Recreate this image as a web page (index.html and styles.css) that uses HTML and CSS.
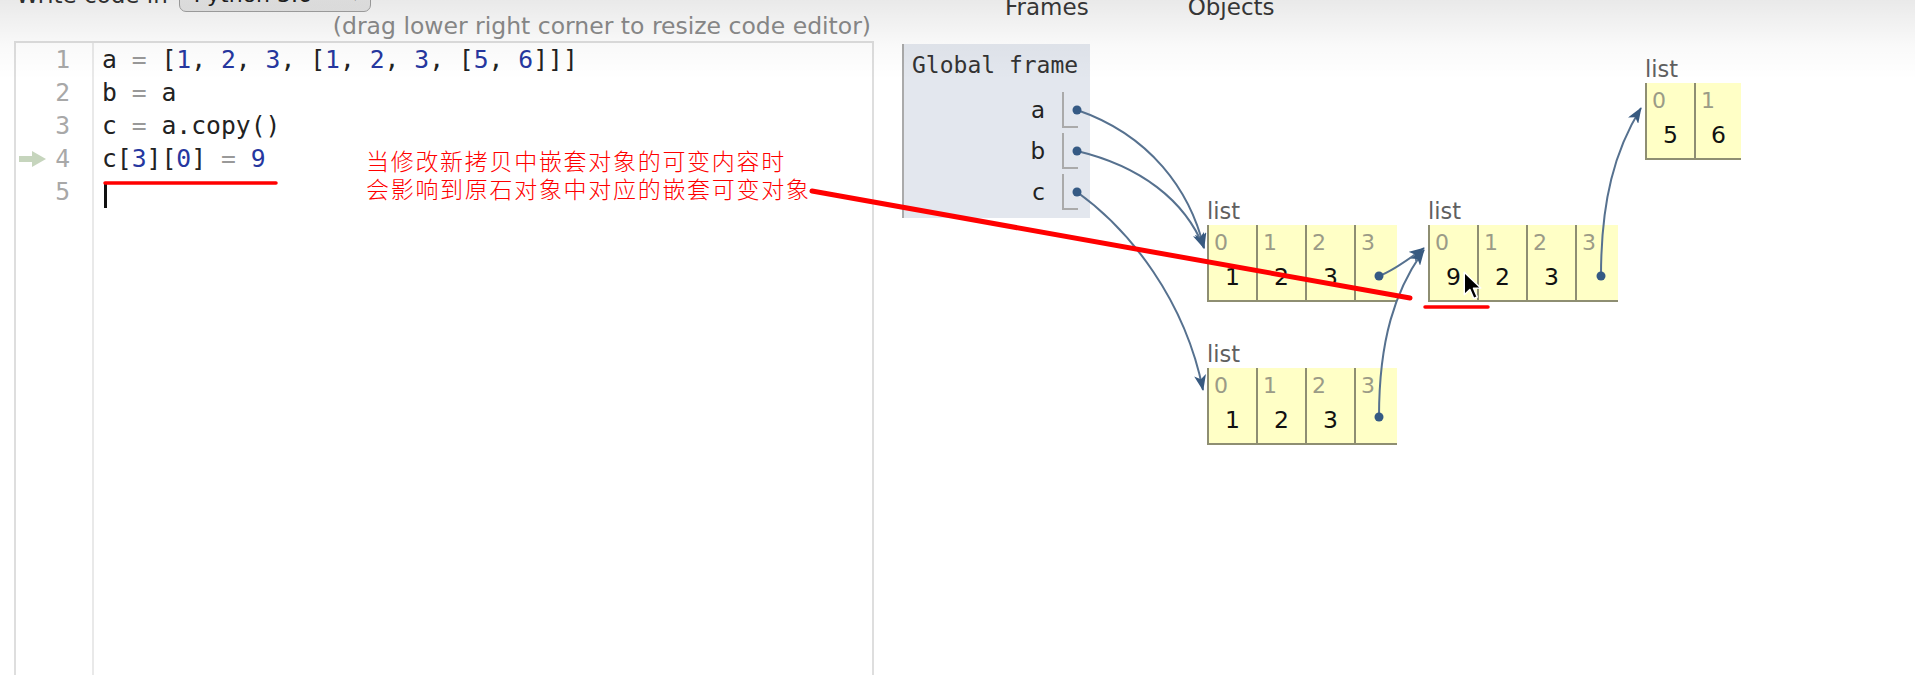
FILE: index.html
```html
<!DOCTYPE html>
<html lang="zh">
<head>
<meta charset="utf-8">
<title>Python Tutor</title>
<link rel="stylesheet" href="styles.css">
</head>
<body>
<div class="page">
  <section class="left">
    <div class="lang-row">
      <span class="lang-label">Write code in</span>
      <div class="lang-select"><span>Python 3.6</span><span class="caret">▾</span></div>
    </div>
    <div class="hint">(drag lower right corner to resize code editor)</div>
    <div class="editor">
      <div class="gutter">
        <div class="gl">1</div>
        <div class="gl">2</div>
        <div class="gl">3</div>
        <div class="gl"><svg class="pc-arrow" viewBox="0 0 27 16"><rect x="0" y="5" width="15" height="6" fill="#c6d5bd"/><polygon points="13,0 27,8 13,16" fill="#c6d5bd"/></svg><span>4</span></div>
        <div class="gl">5</div>
      </div>
      <div class="code">
        <div class="cl">a <span class="op">=</span> [<span class="n">1</span>, <span class="n">2</span>, <span class="n">3</span>, [<span class="n">1</span>, <span class="n">2</span>, <span class="n">3</span>, [<span class="n">5</span>, <span class="n">6</span>]]]</div>
        <div class="cl">b <span class="op">=</span> a</div>
        <div class="cl">c <span class="op">=</span> a.copy()</div>
        <div class="cl">c[<span class="n">3</span>][<span class="n">0</span>] <span class="op">=</span> <span class="n">9</span></div>
        <div class="cl"><span class="text-cursor"></span></div>
      </div>
    </div>
  </section>
  <section class="right">
    <div class="viz-head"><span>Frames</span><span>Objects</span></div>
    <div class="viz">
      <div class="frame">
        <div class="frame-title">Global frame</div>
        <div class="vars">
          <div class="var"><span class="var-name">a</span><span class="ptr"></span></div>
          <div class="var"><span class="var-name">b</span><span class="ptr"></span></div>
          <div class="var"><span class="var-name">c</span><span class="ptr"></span></div>
        </div>
      </div>
      <div class="heap">
        <div class="hobj obj-a">
          <div class="hobj-label">list</div>
          <div class="hlist">
            <div class="cell"><div class="idx">0</div><div class="val">1</div></div>
            <div class="cell"><div class="idx">1</div><div class="val">2</div></div>
            <div class="cell"><div class="idx">2</div><div class="val">3</div></div>
            <div class="cell narrow"><div class="idx">3</div><div class="val">&nbsp;</div></div>
          </div>
        </div>
        <div class="hobj obj-b">
          <div class="hobj-label">list</div>
          <div class="hlist">
            <div class="cell"><div class="idx">0</div><div class="val">9</div></div>
            <div class="cell"><div class="idx">1</div><div class="val">2</div></div>
            <div class="cell"><div class="idx">2</div><div class="val">3</div></div>
            <div class="cell narrow"><div class="idx">3</div><div class="val">&nbsp;</div></div>
          </div>
        </div>
        <div class="hobj obj-c">
          <div class="hobj-label">list</div>
          <div class="hlist">
            <div class="cell"><div class="idx">0</div><div class="val">5</div></div>
            <div class="cell short"><div class="idx">1</div><div class="val">6</div></div>
          </div>
        </div>
        <div class="hobj obj-d">
          <div class="hobj-label">list</div>
          <div class="hlist">
            <div class="cell"><div class="idx">0</div><div class="val">1</div></div>
            <div class="cell"><div class="idx">1</div><div class="val">2</div></div>
            <div class="cell"><div class="idx">2</div><div class="val">3</div></div>
            <div class="cell narrow"><div class="idx">3</div><div class="val">&nbsp;</div></div>
          </div>
        </div>
      </div>
    </div>
  </section>
</div>

<svg class="links" viewBox="0 0 1915 675">
  <defs>
    <marker id="ah" viewBox="0 0 16 12" refX="15" refY="6" markerWidth="16" markerHeight="12" markerUnits="userSpaceOnUse" orient="auto">
      <path d="M0,0 L16,6 L0,12 L4,6 Z" fill="#385a80"/>
    </marker>
  </defs>
  <g fill="none" stroke="#56718f" stroke-width="2">
    <path d="M1077,110 C1150,135 1190,190 1204,248" marker-end="url(#ah)"/>
    <path d="M1077,151 C1140,166 1185,200 1204,248" marker-end="url(#ah)"/>
    <path d="M1077,192 C1130,230 1185,300 1203,390" marker-end="url(#ah)"/>
    <path d="M1379,276 C1395,270 1410,258 1424,248" marker-end="url(#ah)"/>
    <path d="M1379,417 C1379,340 1395,290 1424,250" marker-end="url(#ah)"/>
    <path d="M1601,276 C1601,200 1615,150 1641,108" marker-end="url(#ah)"/>
  </g>
  <g fill="#355a84">
    <circle cx="1077" cy="110" r="4.5"/>
    <circle cx="1077" cy="151" r="4.5"/>
    <circle cx="1077" cy="192" r="4.5"/>
    <circle cx="1379" cy="276" r="4.5"/>
    <circle cx="1601" cy="276" r="4.5"/>
    <circle cx="1379" cy="417" r="4.5"/>
  </g>
</svg>

<div class="note">当修改新拷贝中嵌套对象的可变内容时<br>会影响到原石对象中对应的嵌套可变对象</div>

<svg class="annot" viewBox="0 0 1915 675">
  <g stroke="#ff0000" stroke-linecap="round" fill="none">
    <line x1="105" y1="183" x2="276" y2="183" stroke-width="3.5"/>
    <line x1="812" y1="191" x2="1410" y2="298" stroke-width="5"/>
    <line x1="1425" y1="307" x2="1488" y2="307" stroke-width="3.5"/>
  </g>
</svg>

<svg class="mouse" viewBox="0 0 16 24">
  <path d="M1,1 L1,19 L5.5,14.8 L8.6,22 L11.4,20.8 L8.4,13.8 L14.2,13.6 Z" fill="#000" stroke="#fff" stroke-width="1.2" stroke-linejoin="round"/>
</svg>

<div class="top-shade"></div>
</body>
</html>
```

FILE: styles.css
```css
html, body {
  margin: 0;
  padding: 0;
  width: 1915px;
  height: 675px;
  overflow: hidden;
  background: #fff;
}
body {
  position: relative;
  font-family: "DejaVu Sans", Verdana, sans-serif;
  color: #222;
}
.page {
  display: flex;
  height: 675px;
}

/* ---------- left: editor ---------- */
.left {
  width: 880px;
  flex: none;
  display: flex;
  flex-direction: column;
}
.lang-row {
  height: 12px;
  display: flex;
  align-items: flex-end;
  padding-left: 16px;
  gap: 11px;
}
.lang-label {
  font-size: 23px;
  line-height: 23px;
  margin-bottom: 5px;
  color: #333;
  white-space: nowrap;
}
.lang-select {
  width: 192px;
  height: 40px;
  box-sizing: border-box;
  border: 1px solid #a5a5a5;
  border-radius: 7px;
  background: linear-gradient(#fbfbfb, #ebebeb);
  display: flex;
  align-items: flex-end;
  padding: 0 10px 5px 14px;
  font-size: 22px;
  line-height: 22px;
  color: #222;
}
.lang-select .caret {
  margin-left: auto;
  font-size: 18px;
}
.hint {
  font-size: 23.5px;
  line-height: 24px;
  color: #8c8c8c;
  text-align: right;
  padding-right: 9px;
  margin-top: 2px;
  white-space: nowrap;
}
.editor {
  margin-top: 3px;
  margin-left: 14px;
  width: 860px;
  flex: 1;
  box-sizing: border-box;
  border: 2px solid #dedede;
  border-bottom: none;
  display: flex;
  background: #fff;
}
.gutter {
  width: 76px;
  flex: none;
  border-right: 2px solid #e9e9e9;
}
.gl {
  height: 33px;
  display: flex;
  align-items: center;
  justify-content: flex-end;
  padding-right: 22px;
  font-family: "DejaVu Sans Mono", monospace;
  font-size: 24.7px;
  color: #a8a8a8;
}
.pc-arrow {
  margin-right: auto;
  margin-left: 3px;
  width: 27px;
  height: 16px;
}
.code {
  padding-left: 8px;
  font-family: "DejaVu Sans Mono", monospace;
  font-size: 24.7px;
  color: #222;
}
.cl {
  width: max-content;
  height: 33px;
  line-height: 33px;
  white-space: pre;
}
.n { color: #2637a0; }
.op { color: #999; }
.text-cursor {
  display: block;
  width: 3px;
  height: 26px;
  background: #111;
  margin: 7px 0 0 2px;
}

/* ---------- right: visualization ---------- */
.right {
  flex: 1;
  display: flex;
  flex-direction: column;
}
.viz-head {
  display: flex;
  gap: 99px;
  margin-top: -4px;
  height: 23px;
  padding-left: 125px;
  font-size: 23px;
  line-height: 23px;
  color: #3a3a3a;
}
.viz {
  display: flex;
  margin-top: 25px;
  flex: 1;
}
.frame {
  margin-left: 22px;
  width: 188px;
  height: 174px;
  flex: none;
  box-sizing: border-box;
  border-left: 2px solid #aaa;
  background: #e3e7ee;
  padding: 7px 12px 8px 8px;
}
.frame-title {
  font-family: "DejaVu Sans Mono", monospace;
  font-size: 23px;
  line-height: 28px;
  color: #333;
  white-space: nowrap;
}
.vars {
  margin-top: 13px;
  display: flex;
  flex-direction: column;
  gap: 5px;
}
.var {
  display: flex;
  justify-content: flex-end;
  align-items: center;
  gap: 17px;
  height: 36px;
}
.var-name {
  font-size: 23px;
  color: #222;
}
.ptr {
  width: 16px;
  height: 36px;
  box-sizing: border-box;
  border-left: 2px solid #aaa;
  border-bottom: 2px solid #aaa;
}
.heap {
  position: relative;
  flex: 1;
}
.hobj { position: absolute; }
.obj-a { left: 117px; top: 154px; }
.obj-b { left: 338px; top: 154px; }
.obj-c { left: 555px; top: 12px; }
.obj-d { left: 117px; top: 297px; }
.hobj-label {
  font-size: 22.5px;
  line-height: 26px;
  height: 26px;
  margin-bottom: 1px;
  color: #606060;
}
.hlist { display: flex; }
.cell {
  width: 49px;
  height: 77px;
  box-sizing: border-box;
  background: #ffffc6;
  border-left: 2px solid #8e8e72;
  border-bottom: 2px solid #8e8e72;
}
.cell.narrow { width: 43px; }
.cell.short { width: 47px; }
.idx {
  font-size: 22px;
  line-height: 24px;
  margin-top: 6px;
  padding-left: 5px;
  color: #9b9b87;
}
.val {
  font-size: 23.5px;
  line-height: 30px;
  margin-top: 7px;
  text-align: center;
  color: #111;
}

/* ---------- overlays ---------- */
.links, .annot {
  position: absolute;
  left: 0;
  top: 0;
  width: 1915px;
  height: 675px;
  pointer-events: none;
}
.note {
  position: absolute;
  left: 366px;
  top: 146px;
  font-family: "Noto Sans CJK SC", sans-serif;
  font-weight: 300;
  font-size: 23px;
  line-height: 28px;
  letter-spacing: 1.7px;
  color: #f00;
  white-space: nowrap;
}
.mouse {
  position: absolute;
  left: 1463px;
  top: 271px;
  width: 20px;
  height: 30px;
}
.top-shade {
  position: absolute;
  left: 0;
  top: 0;
  width: 1915px;
  height: 80px;
  background: linear-gradient(rgba(0,0,0,0.085), rgba(0,0,0,0.025) 45px, rgba(0,0,0,0));
  pointer-events: none;
}
```
